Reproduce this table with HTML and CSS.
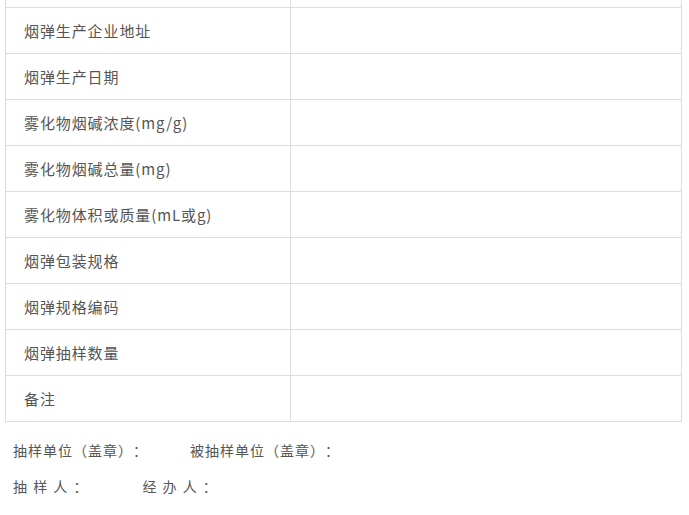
FILE: index.html
```html
<!DOCTYPE html>
<html lang="zh-CN">
<head>
<meta charset="utf-8">
<title>烟弹抽样单</title>
<link rel="stylesheet" href="styles.css">
</head>
<body>
<div class="page">
  <table class="sheet">
    <colgroup><col class="c-label"><col class="c-value"></colgroup>
    <tr><td class="label"></td><td></td></tr>
    <tr><td class="label">烟弹生产企业地址</td><td></td></tr>
    <tr><td class="label">烟弹生产日期</td><td></td></tr>
    <tr><td class="label">雾化物烟碱浓度(mg/g)</td><td></td></tr>
    <tr><td class="label">雾化物烟碱总量(mg)</td><td></td></tr>
    <tr><td class="label">雾化物体积或质量(mL或g)</td><td></td></tr>
    <tr><td class="label">烟弹包装规格</td><td></td></tr>
    <tr><td class="label">烟弹规格编码</td><td></td></tr>
    <tr><td class="label">烟弹抽样数量</td><td></td></tr>
    <tr><td class="label">备注</td><td></td></tr>
  </table>
  <div class="sign">
    <p class="sign-line"><span class="f1">抽样单位（盖章）：</span><span class="f2">被抽样单位（盖章）：</span></p>
    <p class="sign-line"><span class="f1">抽 样 人 ：</span><span class="f3">经 办 人 ：</span></p>
  </div>
</div>
</body>
</html>
```
FILE: styles.css
```css
html, body {
  margin: 0;
  padding: 0;
  background: #fff;
}
body {
  font-family: "Noto Sans CJK SC", "Noto Sans", sans-serif;
  color: #555;
}
.page {
  padding: 0 7px 0 5px;
  overflow: hidden;
}
.sheet {
  border-collapse: collapse;
  width: 677px;
  margin-top: -39px;
  table-layout: fixed;
}
.c-label { width: 285px; }
.sheet td {
  border: 1px solid #ddd;
  height: 45px;
  padding: 0 0 0 18px;
  box-sizing: border-box;
  font-size: 15px;
  letter-spacing: 0.9px;
  vertical-align: middle;
  line-height: 20px;
}
.sheet tr { height: 46px; }
.sign {
  margin-top: 10px;
  padding-left: 8px;
  font-size: 14px;
  letter-spacing: 1px;
  word-spacing: 1px;
  text-spacing-trim: space-all;
}
.sign-line {
  margin: 0;
  line-height: 36px;
  height: 36px;
  white-space: pre;
}
.f1, .f2, .f3 { display: inline-block; }
.sign-line .f1 + .f2 { margin-left: 42px; }
.sign-line .f1 + .f3 { margin-left: 54px; }
```
